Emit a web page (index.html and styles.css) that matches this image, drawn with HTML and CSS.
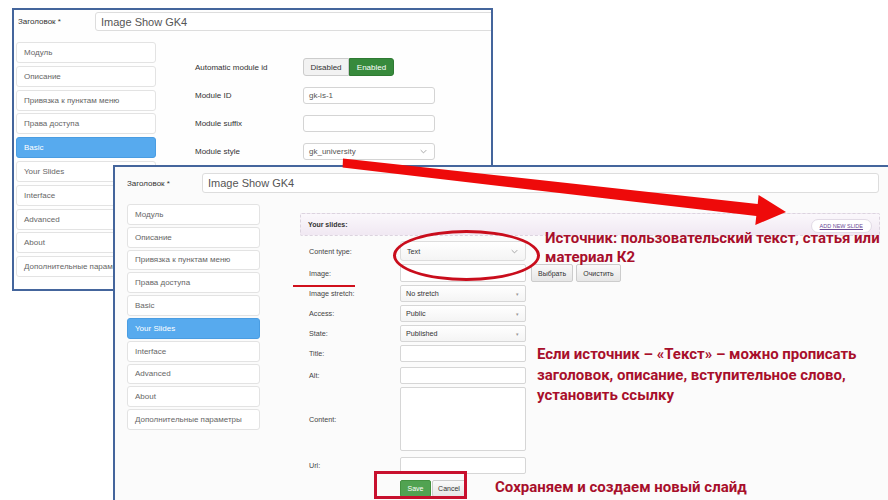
FILE: index.html
```html
<!DOCTYPE html>
<html lang="ru">

<head>
    <meta charset="UTF-8">
    <meta name="viewport" content="width=device-width, initial-scale=1.0">
    <title>Image Show GK4</title>
    <link rel="stylesheet" href="styles.css">
</head>

<body>
    <div class="stage">

        <!-- back screenshot: Basic tab -->
        <section class="shot shot-back">
            <div class="shot-head">
                <span class="head-label">Заголовок *</span>
                <div class="head-input">Image Show GK4</div>
            </div>
            <div class="shot-body">
                <ul class="tabs">
                    <li class="tab">Модуль</li>
                    <li class="tab">Описание</li>
                    <li class="tab">Привязка к пунктам меню</li>
                    <li class="tab">Права доступа</li>
                    <li class="tab tab-active">Basic</li>
                    <li class="tab">Your Slides</li>
                    <li class="tab">Interface</li>
                    <li class="tab">Advanced</li>
                    <li class="tab">About</li>
                    <li class="tab">Дополнительные параметры</li>
                </ul>
                <div class="basic-form">
                    <div class="basic-row">
                        <span class="basic-label">Automatic module id</span>
                        <div class="toggle">
                            <span class="toggle-btn">Disabled</span>
                            <span class="toggle-btn toggle-on">Enabled</span>
                        </div>
                    </div>
                    <div class="basic-row">
                        <span class="basic-label">Module ID</span>
                        <div class="basic-input">gk-is-1</div>
                    </div>
                    <div class="basic-row">
                        <span class="basic-label">Module suffix</span>
                        <div class="basic-input"></div>
                    </div>
                    <div class="basic-row">
                        <span class="basic-label">Module style</span>
                        <div class="basic-input basic-select">gk_university
                            <svg class="chev" viewBox="0 0 10 6"><path d="M1 1l4 4 4-4" /></svg>
                        </div>
                    </div>
                </div>
            </div>
        </section>

        <!-- front screenshot: Your Slides tab -->
        <section class="shot shot-front">
            <div class="shot-head">
                <span class="head-label">Заголовок *</span>
                <div class="head-input">Image Show GK4</div>
            </div>
            <div class="shot-body">
                <ul class="tabs">
                    <li class="tab">Модуль</li>
                    <li class="tab">Описание</li>
                    <li class="tab">Привязка к пунктам меню</li>
                    <li class="tab">Права доступа</li>
                    <li class="tab">Basic</li>
                    <li class="tab tab-active">Your Slides</li>
                    <li class="tab">Interface</li>
                    <li class="tab">Advanced</li>
                    <li class="tab">About</li>
                    <li class="tab">Дополнительные параметры</li>
                </ul>
                <div class="slides">
                    <div class="slides-bar">
                        <span class="slides-title">Your slides:</span>
                        <span class="add-slide">ADD NEW SLIDE</span>
                    </div>
                    <div class="field field-type">
                        <span class="field-label">Content type:</span>
                        <div class="ctrl ctrl-select">Text
                            <svg class="chev" viewBox="0 0 10 6"><path d="M1 1l4 4 4-4" /></svg>
                        </div>
                    </div>
                    <div class="field field-image">
                        <span class="field-label">Image:</span>
                        <div class="ctrl"></div>
                        <span class="btn">Выбрать</span>
                        <span class="btn">Очистить</span>
                    </div>
                    <div class="field">
                        <span class="field-label">Image stretch:</span>
                        <div class="ctrl ctrl-select">No stretch<span class="caret">&#9662;</span></div>
                    </div>
                    <div class="field">
                        <span class="field-label">Access:</span>
                        <div class="ctrl ctrl-select">Public<span class="caret">&#9662;</span></div>
                    </div>
                    <div class="field">
                        <span class="field-label">State:</span>
                        <div class="ctrl ctrl-select">Published<span class="caret">&#9662;</span></div>
                    </div>
                    <div class="field">
                        <span class="field-label">Title:</span>
                        <div class="ctrl"></div>
                    </div>
                    <div class="field field-alt">
                        <span class="field-label">Alt:</span>
                        <div class="ctrl"></div>
                    </div>
                    <div class="field field-content">
                        <span class="field-label">Content:</span>
                        <div class="ctrl ctrl-area"></div>
                    </div>
                    <div class="field field-url">
                        <span class="field-label">Url:</span>
                        <div class="ctrl"></div>
                    </div>
                    <div class="field field-actions">
                        <span class="field-label"></span>
                        <span class="btn btn-save">Save</span>
                        <span class="btn btn-cancel">Cancel</span>
                    </div>
                </div>
            </div>
        </section>

        <!-- annotations -->
        <svg class="arrow" viewBox="0 0 888 500">
            <polygon points="343,158.5 757.7,204 758.6,195 786,212 755.3,225 756.3,216 342.6,167.5" />
        </svg>
        <div class="ring"></div>
        <div class="mark-line"></div>
        <div class="mark-box"></div>

        <p class="note note-source">Источник: пользовательский текст, статья или<br>материал К2</p>
        <p class="note note-text">Если источник – «Текст» – можно прописать<br>заголовок, описание, вступительное слово,<br>установить ссылку</p>
        <p class="note note-save">Сохраняем и создаем новый слайд</p>
    </div>
</body>

</html>
```

FILE: styles.css
```css
* {
    box-sizing: border-box;
}

body {
    margin: 0;
    background: #ffffff;
    font-family: "Liberation Sans", Arial, sans-serif;
    color: #555555;
}

.stage {
    position: relative;
    width: 888px;
    height: 500px;
    overflow: hidden;
    background: #ffffff;
}

/* screenshot windows */

.shot {
    position: absolute;
    border: 2px solid #44659c;
    overflow: hidden;
}

.shot-back {
    left: 12px;
    top: 8px;
    width: 481px;
    height: 283px;
    background: #fefefe;
    padding: 0 2px;
}

.shot-front {
    left: 113px;
    top: 165px;
    width: 800px;
    height: 360px;
    background: #fbfbfb;
    padding: 0 12px;
    z-index: 1;
}

.shot-head {
    display: flex;
    align-items: center;
}

.head-label {
    font-size: 8px;
    color: #333333;
    flex: none;
}

.head-input {
    flex: none;
    border: 1px solid #dddddd;
    border-radius: 3px;
    background: #ffffff;
    color: #555555;
    font-size: 11px;
    padding-left: 5px;
    display: flex;
    align-items: center;
}

.shot-back .shot-head {
    margin-top: 2px;
    padding-left: 2px;
}

.shot-back .head-label {
    width: 77px;
}

.shot-back .head-input {
    width: 500px;
    height: 19px;
}

.shot-front .shot-head {
    margin-top: 6px;
}

.shot-front .head-label {
    width: 75px;
}

.shot-front .head-input {
    width: 677px;
    height: 20px;
}

.shot-body {
    display: flex;
    align-items: flex-start;
    margin-top: 11px;
}

.tabs {
    list-style: none;
    margin: 0;
    padding: 0;
    display: flex;
    flex-direction: column;
    flex: none;
}

.tab {
    height: 21px;
    margin-bottom: 2.8px;
    border: 1px solid #e3e3e3;
    border-radius: 3px;
    background: #ffffff;
    font-size: 8px;
    color: #666666;
    padding-left: 7px;
    display: flex;
    align-items: center;
    white-space: nowrap;
    overflow: hidden;
}

.tab-active {
    background: #57aaee;
    border-color: #4a9de2;
    color: #ffffff;
}

.shot-back .tabs {
    width: 140px;
}

.shot-front .tabs {
    width: 133px;
}

.shot-front .tab {
    height: 20.8px;
    margin-bottom: 2px;
}

/* Basic tab form */

.basic-form {
    margin-left: 39px;
    margin-top: 16px;
    display: flex;
    flex-direction: column;
    gap: 10px;
}

.basic-row {
    display: flex;
    align-items: center;
    height: 18px;
}

.basic-label {
    width: 108px;
    font-size: 8px;
    color: #333333;
}

.toggle {
    display: flex;
    height: 18px;
}

.toggle-btn {
    display: flex;
    align-items: center;
    justify-content: center;
    width: 46px;
    font-size: 8px;
    color: #333333;
    background: #f2f2f2;
    border: 1px solid #cccccc;
    border-radius: 3px 0 0 3px;
}

.toggle-on {
    width: 45px;
    background: #378a3c;
    border-color: #2f7a33;
    color: #ffffff;
    border-radius: 0 3px 3px 0;
}

.basic-input {
    position: relative;
    width: 132px;
    height: 17px;
    border: 1px solid #d4d4d4;
    border-radius: 3px;
    background: #ffffff;
    font-size: 8px;
    color: #555555;
    padding-left: 5px;
    display: flex;
    align-items: center;
}

.chev {
    position: absolute;
    right: 7px;
    top: 50%;
    width: 7px;
    height: 5px;
    margin-top: -2px;
    fill: none;
    stroke: #999999;
    stroke-width: 1.2;
}

/* Your Slides form */

.slides {
    margin-left: 40px;
    margin-top: 9px;
    width: 580px;
    display: flex;
    flex-direction: column;
    gap: 3px;
}

.slides-bar {
    height: 23px;
    border: 1px dashed #dcd4df;
    border-radius: 2px;
    background: linear-gradient(#fbf8fc, #f0e8f2);
    display: flex;
    align-items: center;
    justify-content: space-between;
    padding: 0 7px 0 7px;
    margin-bottom: 2px;
}

.slides-title {
    font-size: 7px;
    font-weight: bold;
    color: #333333;
}

.add-slide {
    margin-top: 2px;
    padding: 3px 8px;
    border: 1px solid #e2dbe6;
    border-radius: 7px;
    background: #ffffff;
    font-size: 5.5px;
    color: #6a4a96;
    text-decoration: underline;
}

.field {
    display: flex;
    align-items: center;
    height: 17px;
    padding-left: 9px;
}

.field-label {
    width: 91px;
    flex: none;
    font-size: 7.2px;
    color: #444444;
}

.ctrl {
    position: relative;
    width: 126px;
    height: 100%;
    border: 1px solid #d6d6d6;
    border-radius: 2px;
    background: #ffffff;
    font-size: 7.2px;
    color: #333333;
    padding-left: 5px;
    display: flex;
    align-items: center;
}

.ctrl-select {
    background: linear-gradient(#ffffff, #f4f4f4);
}

.caret {
    position: absolute;
    right: 6px;
    font-size: 5px;
    color: #999999;
}

.field-type {
    height: 20px;
}

.field-type .ctrl {
    border-color: #dddddd;
    border-radius: 3px;
    padding-left: 6px;
}

.field-image {
    height: 18px;
}

.btn {
    height: 18px;
    margin-left: 5px;
    padding: 0 6px;
    border: 1px solid #cccccc;
    border-radius: 2px;
    background: linear-gradient(#fafafa, #e6e6e6);
    font-size: 7px;
    color: #333333;
    display: flex;
    align-items: center;
}

.field-image .btn + .btn {
    margin-left: 3px;
}

.field-alt {
    margin-top: 2px;
}

.field-content {
    height: 64px;
}

.field-url,
.field-actions {
    margin-top: 3px;
}

.btn-save {
    margin-left: 0;
    width: 31px;
    height: 17px;
    justify-content: center;
    background: #51a351;
    border-color: #43913f;
    color: #ffffff;
}

.btn-cancel {
    margin-left: 1px;
    width: 34px;
    height: 17px;
    justify-content: center;
    padding: 0;
}

/* annotations */

.arrow {
    position: absolute;
    left: 0;
    top: 0;
    width: 888px;
    height: 500px;
    z-index: 2;
    fill: #ee0a0a;
}

.ring {
    position: absolute;
    left: 393px;
    top: 230px;
    width: 147px;
    height: 51px;
    border: 3px solid #c90d1c;
    border-radius: 50%;
    z-index: 2;
}

.mark-line {
    position: absolute;
    left: 293px;
    top: 285px;
    width: 62px;
    height: 2px;
    background: #d0101c;
    z-index: 2;
}

.mark-box {
    position: absolute;
    left: 374px;
    top: 471px;
    width: 93px;
    height: 28px;
    border: 3px solid #c8102e;
    z-index: 2;
}

.note {
    position: absolute;
    margin: 0;
    z-index: 2;
    font-family: Roboto, "Noto Sans", sans-serif;
    font-weight: bold;
    font-size: 15px;
    line-height: 20px;
    color: #a80f2b;
    white-space: nowrap;
}

.note-source {
    left: 545px;
    top: 229px;
    line-height: 18.5px;
}

.note-text {
    left: 537px;
    top: 344px;
    line-height: 20.5px;
}

.note-save {
    left: 495px;
    top: 477px;
}
```
